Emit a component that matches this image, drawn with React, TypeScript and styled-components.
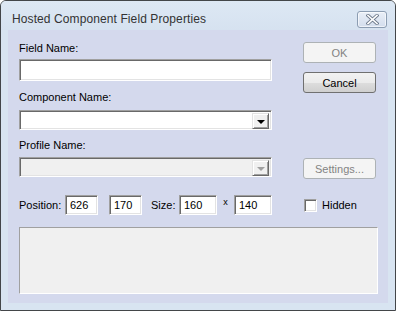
import React, { useState } from 'react';
import styled, { createGlobalStyle, css } from 'styled-components';

const GlobalStyle = createGlobalStyle`
  html, body {
    margin: 0;
    padding: 0;
    background: #ffffff;
  }
  * {
    box-sizing: border-box;
  }
`;

const Window = styled.div`
  width: 396px;
  height: 311px;
  border: 1px solid #434649;
  border-radius: 6px 6px 0 0;
  background: #d8e4f1;
  display: flex;
  flex-direction: column;
  overflow: hidden;
  font-family: 'Liberation Sans', Arial, sans-serif;
`;

const TitleBar = styled.div`
  height: 29px;
  padding: 7px 8px 0 11px;
  display: flex;
  align-items: center;
  justify-content: space-between;
  background: linear-gradient(#dde8f4, #d6e2f0);
`;

const Title = styled.span`
  font-size: 12px;
  color: #333;
  letter-spacing: 0.1px;
`;

const CloseButton = styled.button`
  width: 30px;
  height: 17px;
  padding: 0;
  border: 1px solid #8c9db2;
  border-radius: 3px;
  background: linear-gradient(#e9eff7, #d3dded);
  display: flex;
  align-items: center;
  justify-content: center;
  box-shadow: inset 0 0 0 1px rgba(255, 255, 255, 0.6);
`;

const Client = styled.div`
  margin: 0 7px;
  height: 273px;
  background: #d4d9ed;
  padding: 12px 12px 0 11px;
  font-size: 11px;
  color: #000;
`;

const Top = styled.div`
  display: flex;
`;

const LeftCol = styled.div`
  width: 253px;
  display: flex;
  flex-direction: column;
`;

const RightCol = styled.div`
  width: 73px;
  margin-left: 31px;
  display: flex;
  flex-direction: column;
`;

const Label = styled.label<{ $gap: number; $top?: number }>`
  display: block;
  line-height: 13px;
  height: 13px;
  margin-top: ${({ $top }) => $top ?? 0}px;
  margin-bottom: ${({ $gap }) => $gap}px;
  white-space: nowrap;
`;

const sunken = css`
  border: 1px solid;
  border-color: #a0a0a0 #ffffff #ffffff #a0a0a0;
  box-shadow: inset 1px 1px 0 #696969, inset -1px -1px 0 #e3e3e3;
`;

const TextBox = styled.input<{ $w?: number; $h?: number }>`
  ${sunken}
  width: ${({ $w }) => ($w ? `${$w}px` : '100%')};
  height: ${({ $h }) => $h ?? 22}px;
  padding: 0 0 0 4px;
  background: #fff;
  font-family: inherit;
  font-size: 11px;
  color: #000;
  outline: none;
  margin: 0;
`;

const Combo = styled.div<{ $disabled?: boolean }>`
  ${sunken}
  height: 20px;
  padding: 2px;
  display: flex;
  justify-content: flex-end;
  background: ${({ $disabled }) => ($disabled ? '#f0f0f0' : '#fff')};
`;

const DropButton = styled.div<{ $disabled?: boolean }>`
  width: 17px;
  height: 16px;
  background: #f0f0f0;
  border: 1px solid;
  border-color: #e3e3e3 #696969 #696969 #e3e3e3;
  box-shadow: inset 1px 1px 0 #fff, inset -1px -1px 0 #a0a0a0;
  display: flex;
  align-items: center;
  justify-content: center;
  &::after {
    content: '';
    width: 0;
    height: 0;
    border-left: 4px solid transparent;
    border-right: 4px solid transparent;
    border-top: 4px solid ${({ $disabled }) => ($disabled ? '#a0a0a0' : '#000')};
    margin-top: 1px;
  }
`;

const Button = styled.button<{ $top?: number }>`
  width: 73px;
  height: 21px;
  margin: ${({ $top }) => $top ?? 0}px 0 0 0;
  padding: 0;
  border: 1px solid #707070;
  border-radius: 3px;
  background: linear-gradient(#f2f2f2 0%, #ebebeb 50%, #dddddd 51%, #cfcfcf 100%);
  font-family: inherit;
  font-size: 11px;
  color: #000;
  &:disabled {
    border-color: #adb2b5;
    background: #f4f4f4;
    color: #838383;
  }
`;

const PosRow = styled.div`
  display: flex;
  align-items: center;
  margin-top: 16px;
  height: 20px;
`;

const RowText = styled.span<{ $w: number; $ml?: number }>`
  width: ${({ $w }) => $w}px;
  margin-left: ${({ $ml }) => $ml ?? 0}px;
  white-space: nowrap;
`;

const Times = styled.span`
  width: 17px;
  text-align: center;
  font-size: 9px;
  align-self: flex-start;
  margin-top: 2px;
`;

const Check = styled.label`
  display: flex;
  align-items: center;
  margin-left: 32px;
  gap: 5px;
`;

const CheckBox = styled.span`
  ${sunken}
  width: 13px;
  height: 13px;
  background: #fff;
`;

const Panel = styled.div`
  width: 359px;
  height: 67px;
  margin-top: 12px;
  background: #f0f0f0;
  border: 1px solid;
  border-color: #a0a0a0 #ffffff #ffffff #a0a0a0;
`;

function App(): JSX.Element {
  const [fieldName, setFieldName] = useState<string>('');
  const [pos, setPos] = useState({ x: '626', y: '170', w: '160', h: '140' });

  return (
    <>
      <GlobalStyle />
      <Window>
        <TitleBar>
          <Title>Hosted Component Field Properties</Title>
          <CloseButton aria-label="Close">
            <svg width="13" height="11" viewBox="0 0 13 11">
              <path
                d="M2 1.5 L11 9.5 M11 1.5 L2 9.5"
                stroke="#6f7b8c"
                strokeWidth="3.4"
                strokeLinecap="square"
              />
              <path
                d="M2 1.5 L11 9.5 M11 1.5 L2 9.5"
                stroke="#ffffff"
                strokeWidth="1.6"
                strokeLinecap="square"
              />
            </svg>
          </CloseButton>
        </TitleBar>
        <Client>
          <Top>
            <LeftCol>
              <Label $gap={4}>Field Name:</Label>
              <TextBox value={fieldName} onChange={(e) => setFieldName(e.currentTarget.value)} />
              <Label $top={10} $gap={6}>Component Name:</Label>
              <Combo>
                <DropButton />
              </Combo>
              <Label $top={9} $gap={5}>Profile Name:</Label>
              <Combo $disabled>
                <DropButton $disabled />
              </Combo>
            </LeftCol>
            <RightCol>
              <Button disabled>OK</Button>
              <Button $top={9}>Cancel</Button>
              <Button $top={65} disabled>Settings...</Button>
            </RightCol>
          </Top>
          <PosRow>
            <RowText $w={46}>Position:</RowText>
            <TextBox $w={33} $h={20} value={pos.x} onChange={(e) => setPos({ ...pos, x: e.currentTarget.value })} />
            <TextBox $w={33} $h={20} style={{ marginLeft: 11 }} value={pos.y} onChange={(e) => setPos({ ...pos, y: e.currentTarget.value })} />
            <RowText $w={28} $ml={9}>Size:</RowText>
            <TextBox $w={38} $h={20} value={pos.w} onChange={(e) => setPos({ ...pos, w: e.currentTarget.value })} />
            <Times>x</Times>
            <TextBox $w={38} $h={20} value={pos.h} onChange={(e) => setPos({ ...pos, h: e.currentTarget.value })} />
            <Check>
              <CheckBox />
              Hidden
            </Check>
          </PosRow>
          <Panel />
        </Client>
      </Window>
    </>
  );
}

export default App;
